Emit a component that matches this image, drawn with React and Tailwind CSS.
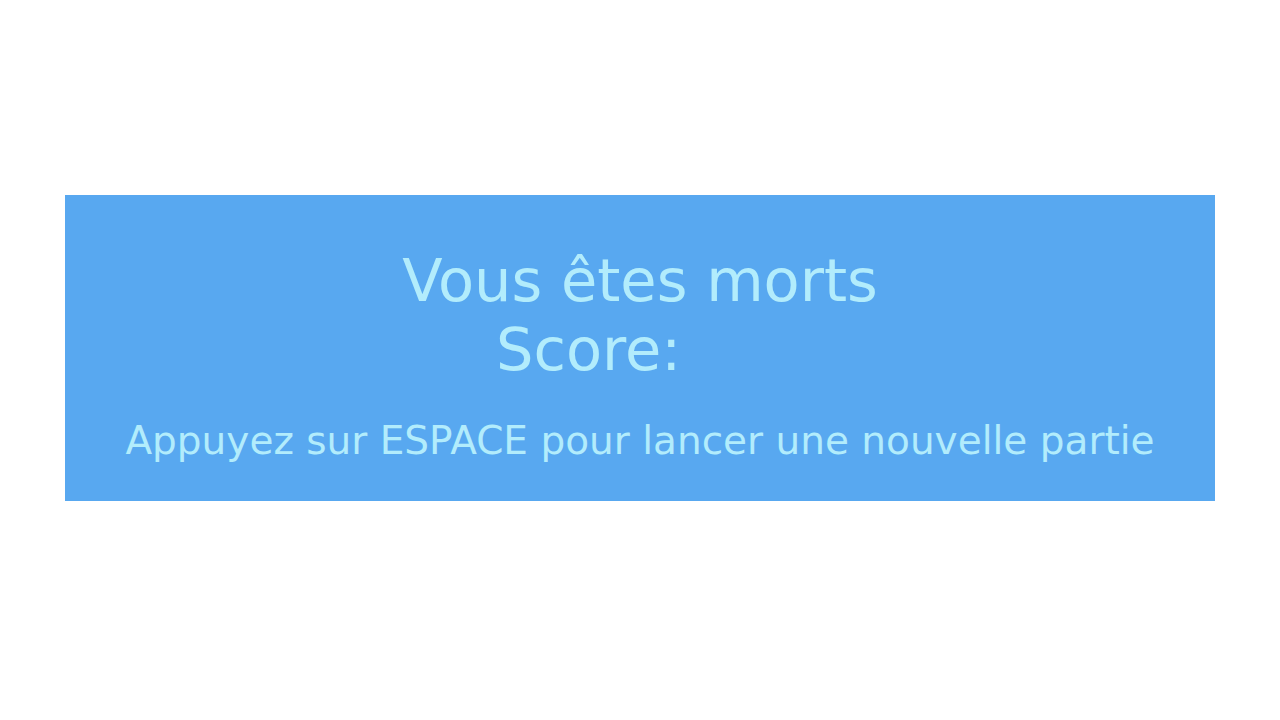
export default function App() {
  return (
    <div className="w-[1280px] h-[720px] bg-white pt-[195px] font-['DejaVu_Sans',sans-serif]">
      <div className="mx-[65px] h-[306px] bg-[#58a8f0] text-[#b2ecfc] flex flex-col items-center pt-[51px]">
        <div className="text-[59px] text-center leading-[normal]">
          <div>Vous êtes morts</div>
          <div>
            Score: <span className="inline-block w-[84px]"></span>
          </div>
        </div>
        <div className="mt-[34px] text-[39px] leading-[normal] text-center">
          Appuyez sur ESPACE pour lancer une nouvelle partie
        </div>
      </div>
    </div>
  );
}
